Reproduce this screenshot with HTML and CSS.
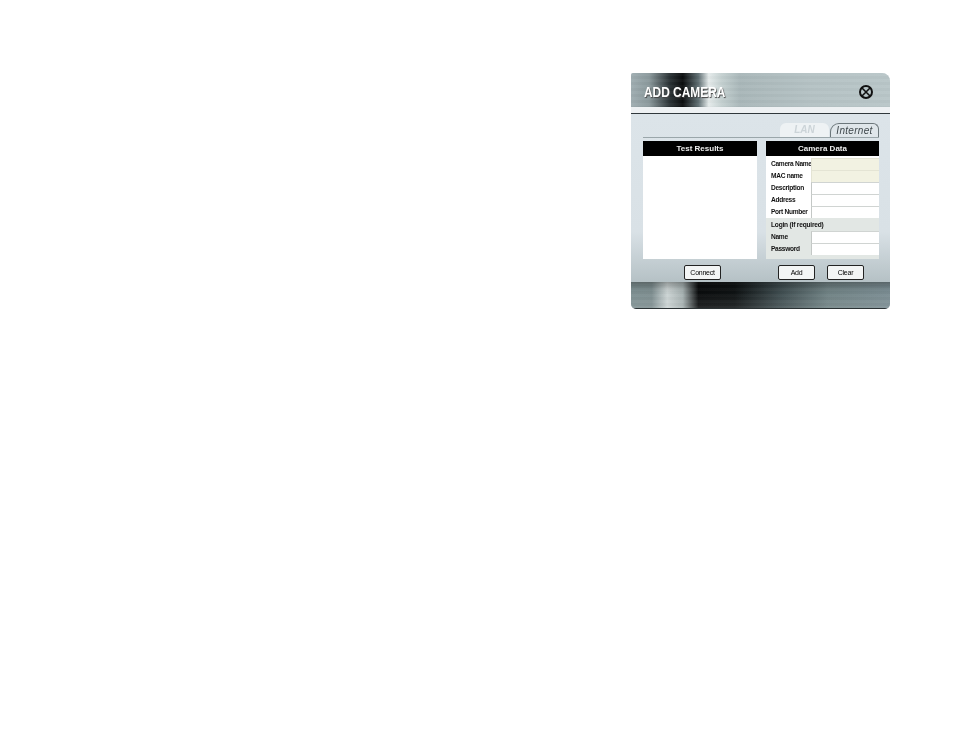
FILE: index.html
```html
<!DOCTYPE html>
<html lang="en">

<head>
    <meta charset="UTF-8">
    <title>Add Camera</title>
    <link rel="stylesheet" href="styles.css">
</head>

<body>
    <div class="window">
        <div class="titlebar">
            <div class="title">ADD CAMERA</div>
            <svg class="close" width="16" height="16" viewBox="0 0 16 16">
                <circle cx="8" cy="8" r="6" fill="none" stroke="#111" stroke-width="2"/>
                <path d="M4 4L12 12M12 4L4 12" stroke="#111" stroke-width="1.6"/>
            </svg>
        </div>
        <div class="strip"></div>

        <div class="content">
            <div class="tabs">
                <div class="tab lan">LAN</div>
                <div class="tab internet">Internet</div>
            </div>

            <div class="panels">
                <div class="panel results">
                    <div class="panel-head">Test Results</div>
                    <div class="results-box"></div>
                </div>

                <div class="panel data">
                    <div class="panel-head">Camera Data</div>
                    <div class="fields">
                        <div class="row"><label>Camera Name</label><div class="input tan"></div></div>
                        <div class="row"><label>MAC name</label><div class="input tan"></div></div>
                        <div class="row"><label>Description</label><div class="input"></div></div>
                        <div class="row"><label>Address</label><div class="input"></div></div>
                        <div class="row"><label>Port Number</label><div class="input"></div></div>
                    </div>
                    <div class="login">
                        <div class="login-head">Login (If required)</div>
                        <div class="row"><label>Name</label><div class="input"></div></div>
                        <div class="row"><label>Password</label><div class="input"></div></div>
                    </div>
                </div>
            </div>

            <div class="buttons">
                <div class="btn-left">
                    <div class="btn">Connect</div>
                </div>
                <div class="btn-right">
                    <div class="btn">Add</div>
                    <div class="btn">Clear</div>
                </div>
            </div>
        </div>

        <div class="footer"></div>
    </div>
</body>

</html>
```

FILE: styles.css
```css
* {
    box-sizing: border-box;
}

body {
    margin: 0;
    background-color: white;
    font-family: "Liberation Sans", Arial, sans-serif;
    padding: 73px 0 0 631px;
}

.window {
    width: 259px;
    height: 236px;
    background-color: #d9e1e6;
    border-radius: 2px 8px 5px 5px;
    overflow: hidden;
    display: flex;
    flex-direction: column;
    filter: blur(0.35px);
}

.titlebar {
    height: 34px;
    padding: 0 16px 0 13px;
    display: flex;
    justify-content: space-between;
    align-items: center;
    background:
        repeating-linear-gradient(180deg, rgba(255, 255, 255, 0.03) 0, rgba(255, 255, 255, 0.03) 3px, rgba(0, 0, 0, 0.015) 3px, rgba(0, 0, 0, 0.015) 6px),
        linear-gradient(90deg, #9fadb1 0%, #8b999c 7%, #2a3235 15%, #0b0d0e 20%, #5f6e72 26%, #e4eaea 30%, #c4d0d0 35%, #a9b7b9 42%, #b5c2c4 70%, #b9c6c8 100%);
}

.title {
    color: white;
    font-size: 14px;
    font-weight: bold;
    transform: scaleX(0.85);
    transform-origin: left center;
    text-shadow: 1px 1px 1px #444;
    white-space: nowrap;
    margin-top: 3px;
}

.close {
    margin-top: 4px;
}

.strip {
    height: 7px;
    background-color: #eef1f3;
    border-bottom: 1px solid #30383c;
    flex-shrink: 0;
}

.content {
    flex: 1;
    padding: 9px 11px 0 12px;
    background: linear-gradient(180deg, #dce4e9 0%, #d9e1e6 70%, #b5c1c5 100%);
}

.tabs {
    height: 15px;
    display: flex;
    justify-content: flex-end;
    gap: 1px;
    border-bottom: 1px solid #9aa6aa;
}

.tab {
    width: 49px;
    text-align: center;
    font-size: 10px;
    font-weight: bold;
    font-style: italic;
    line-height: 14px;
    border-radius: 6px 6px 0 0;
}

.lan {
    background-color: #eef2f4;
    color: #ccd4d8;
}

.internet {
    color: #3f484c;
    background-color: #dfe6ea;
    border: 1px solid #6c777b;
    border-bottom: none;
    border-radius: 9px 6px 0 0;
    font-weight: normal;
    letter-spacing: 0.3px;
}

.panels {
    margin-top: 3px;
    display: flex;
    justify-content: space-between;
}

.panel {
    width: 114px;
    height: 118px;
    display: flex;
    flex-direction: column;
}

.data {
    width: 113px;
}

.panel-head {
    height: 15px;
    flex-shrink: 0;
    background-color: black;
    color: #eee;
    font-size: 8px;
    font-weight: bold;
    text-align: center;
    line-height: 15px;
}

.results-box {
    flex: 1;
    background-color: white;
}

.fields {
    background-color: white;
    padding-top: 2px;
    height: 62px;
}

.login {
    background-color: #e2e7e4;
    flex: 1;
}

.login-head {
    height: 13px;
    line-height: 13px;
    padding-left: 5px;
    font-size: 6.6px;
    letter-spacing: -0.2px;
    font-weight: bold;
    color: #111;
}

.row {
    height: 12px;
    display: flex;
    align-items: stretch;
}

.row label {
    width: 45px;
    flex-shrink: 0;
    padding-left: 5px;
    font-size: 6.6px;
    letter-spacing: -0.3px;
    font-weight: bold;
    line-height: 11px;
    color: #111;
    white-space: nowrap;
}

.input {
    flex: 1;
    background-color: white;
    border-top: 1px solid #d0d4d2;
    border-left: 1px solid #c4c8c6;
}

.tan {
    background-color: #f2f2e2;
    border-color: #e4e4d4;
}

.buttons {
    margin-top: 6px;
    display: flex;
}

.btn-left {
    width: 135px;
    padding-left: 41px;
}

.btn-right {
    display: flex;
    gap: 12px;
}

.btn {
    width: 37px;
    height: 15px;
    background-color: #f3f5f5;
    border: 1px solid #222;
    border-radius: 2px;
    font-size: 7px;
    letter-spacing: -0.25px;
    line-height: 13px;
    text-align: center;
    color: #000;
}

.footer {
    height: 27px;
    flex-shrink: 0;
    border-bottom: 1px solid #2c3335;
    background:
        repeating-linear-gradient(180deg, rgba(255, 255, 255, 0.025) 0, rgba(255, 255, 255, 0.025) 3px, rgba(0, 0, 0, 0.02) 3px, rgba(0, 0, 0, 0.02) 6px),
        linear-gradient(180deg, rgba(0, 0, 0, 0.3) 0%, rgba(0, 0, 0, 0.1) 20%, rgba(255, 255, 255, 0) 40%, rgba(255, 255, 255, 0.1) 100%),
        linear-gradient(90deg, #7d8f91 0%, #7d8d8f 8%, #cbd3d3 14%, #a5b0b0 20%, #0a0c0d 26%, #0e1213 40%, #3f4d50 58%, #6f8183 76%, #7a8c92 100%);
}
```
